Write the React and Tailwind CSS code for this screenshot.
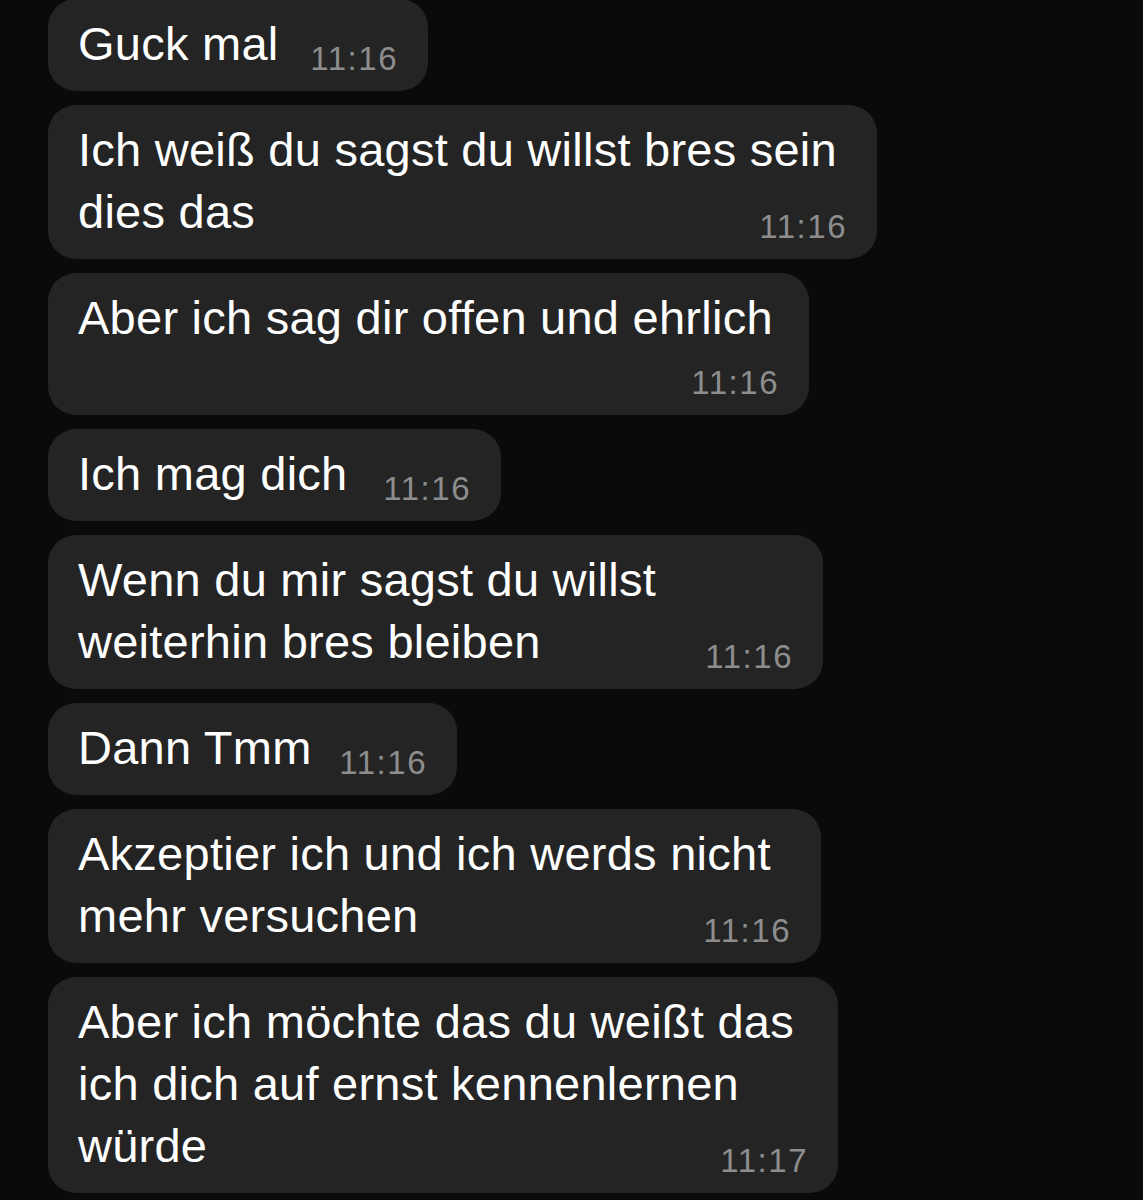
const messages = [
  { lines: ["Guck mal"], time: "11:16", width: "w-[380px]" },
  { lines: ["Ich weiß du sagst du willst bres sein", "dies das"], time: "11:16", width: "w-[829px]" },
  { lines: ["Aber ich sag dir offen und ehrlich"], time: "11:16", width: "w-[761px]", timeRow: true },
  { lines: ["Ich mag dich"], time: "11:16", width: "w-[453px]" },
  { lines: ["Wenn du mir sagst du willst", "weiterhin bres bleiben"], time: "11:16", width: "w-[775px]" },
  { lines: ["Dann Tmm"], time: "11:16", width: "w-[409px]" },
  { lines: ["Akzeptier ich und ich werds nicht", "mehr versuchen"], time: "11:16", width: "w-[773px]" },
  { lines: ["Aber ich möchte das du weißt das", "ich dich auf ernst kennenlernen", "würde"], time: "11:17", width: "w-[790px]" },
];

function Time({ value }) {
  return (
    <span className="shrink-0 text-[33px] leading-none tracking-[1.5px] text-[#8d8d8d]">
      {value}
    </span>
  );
}

function Bubble({ msg }) {
  const last = msg.lines.length - 1;
  return (
    <div className={`${msg.width} rounded-[28px] bg-[#242424] px-[30px] pt-[14px] pb-[16px]`}>
      {msg.lines.map((line, i) =>
        i === last && !msg.timeRow ? (
          <div key={i} className="flex items-end justify-between">
            <span className="whitespace-nowrap">{line}</span>
            <Time value={msg.time} />
          </div>
        ) : (
          <div key={i} className="whitespace-nowrap">
            {line}
          </div>
        )
      )}
      {msg.timeRow && (
        <div className="flex h-[50px] items-end justify-end">
          <Time value={msg.time} />
        </div>
      )}
    </div>
  );
}

export default function App() {
  return (
    <div
      className="h-[1200px] w-full overflow-hidden bg-[#0a0a0a] text-white"
      style={{ fontFamily: '"Liberation Sans", Arial, sans-serif' }}
    >
      <div className="-mt-px flex flex-col items-start gap-[14px] pl-[48px] text-[47px] leading-[62px] tracking-[0.25px]">
        {messages.map((msg, i) => (
          <Bubble key={i} msg={msg} />
        ))}
      </div>
    </div>
  );
}
